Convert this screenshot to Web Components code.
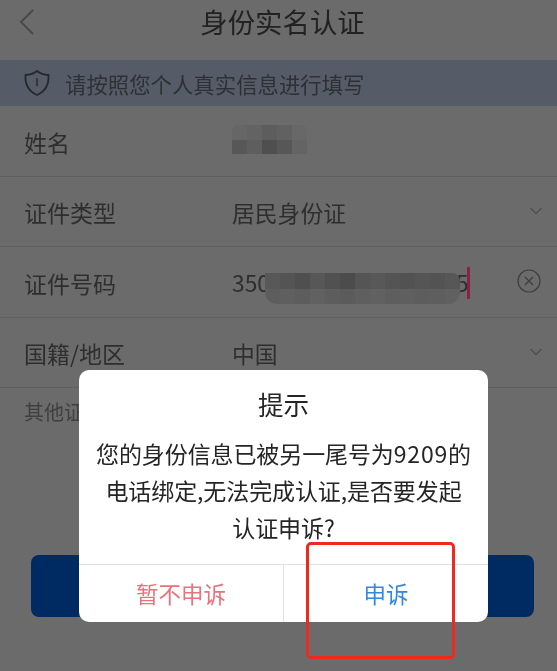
<!DOCTYPE html>
<html lang="zh">
<head>
<meta charset="utf-8">
<title>身份实名认证</title>
<style>
html, body { margin: 0; height: 100%; background: #6b6b6b; }
body { font-family: "Noto Sans CJK SC", "Noto Sans", sans-serif; overflow: hidden; }
</style>
</head>
<body>
<verify-page>
  <nav-bar slot="nav">身份实名认证</nav-bar>
  <notice-bar slot="notice">请按照您个人真实信息进行填写</notice-bar>

  <form-row label="姓名">
    <mosaic-block style="left:232px;top:125px;width:75px;height:29px;border-radius:6px 6px 0 0" cols="5" rows="2"
      shades="#666666,#636363,#5d5d5d,#616161,#686868,#575757,#5e5e5e,#4f4f4f,#575757,#646464"></mosaic-block>
  </form-row>
  <form-row label="证件类型" value="居民身份证" trail="chevron"></form-row>
  <form-row label="证件号码" trail="clear">
    <span>350</span>
    <span style="position:absolute;left:456px;top:265px;line-height:36px">5</span>
    <mosaic-block style="left:265px;top:273px;width:195px;height:31px;border-radius:0 8px 12px 12px" cols="13" rows="2"
      shades="#585858,#545454,#4f4f4f,#575757,#515151,#4c4c4c,#555555,#585858,#545454,#525252,#555555,#535353,#575757,#5d5d5d,#5f5f5f,#5d5d5d,#616161,#5d5d5d,#5b5b5b,#5f5f5f,#616161,#5e5e5e,#5f5f5f,#5d5d5d,#5e5e5e,#606060"></mosaic-block>
    <span style="position:absolute;left:467px;top:267px;width:3px;height:32px;background:#8c2048"></span>
  </form-row>
  <form-row label="国籍/地区" value="中国" trail="chevron"></form-row>

  <div slot="other">其他证件</div>
  <submit-bar slot="submit"></submit-bar>

  <alert-dialog slot="overlay" heading="提示" cancel="暂不申诉" confirm="申诉">
    您的身份信息已被另一尾号为<span style="letter-spacing:.8px">9209</span>的<br>电话绑定,无法完成认证,是否要发起<br>认证申诉?
  </alert-dialog>
  <mark-box slot="overlay"></mark-box>
</verify-page>

<script>
// page frame, everything else gets slotted in
class VerifyPage extends HTMLElement {
  constructor() {
    super();
    this.attachShadow({mode: "open"}).innerHTML = `
    <style>
    :host { display: block; position: relative; width: 557px; height: 671px; overflow: hidden; background: #6b6b6b; color: #2c2c2c; filter: blur(0.35px); }
    .rows { display: flex; flex-direction: column; }
    ::slotted([slot="other"]) { padding: 9px 24px 0; height: 36px; line-height: 30px; font-size: 20px; color: #3f3f3f; }
    </style>
    <slot name="nav"></slot>
    <slot name="notice"></slot>
    <div class="rows"><slot></slot></div>
    <slot name="other"></slot>
    <slot name="submit"></slot>
    <slot name="overlay"></slot>
    `;
  }
}

class NavBar extends HTMLElement {
  constructor() {
    super();
    this.attachShadow({mode: "open"}).innerHTML = `
    <style>
    :host { display: flex; align-items: center; justify-content: center; position: relative; height: 60px; font-size: 27.4px; color: #222; }
    svg { position: absolute; left: 18px; top: 8px; }
    span { margin-top: -19px; margin-left: 8px; }
    </style>
    <svg width="18" height="28" viewBox="0 0 18 28" fill="none" stroke="#4a4a4a" stroke-width="2"><path d="M15 2 3 14l12 12"/></svg>
    <span><slot></slot></span>
    `;
  }
}

class NoticeBar extends HTMLElement {
  constructor() {
    super();
    this.attachShadow({mode: "open"}).innerHTML = `
    <style>
    :host { display: flex; align-items: center; height: 46px; padding-left: 23px; background: #565c67; color: #2e3036; font-size: 21.4px; }
    svg { margin-right: 14px; }
    </style>
    <svg width="28" height="28" viewBox="0 0 28 28" fill="none" stroke="#26282c" stroke-width="1.8"><path d="M14 2c3 2.400 7 3.800 11.500 4 .6 9-2.500 16-11.500 20C5 22 1.900 15 2.500 6 7 5.800 11 4.400 14 2Z"/><path d="M14 9v8" stroke-width="1.400"/></svg>
    <span><slot></slot></span>
    `;
  }
}

class FormRow extends HTMLElement {
  constructor() {
    super();
    this.attachShadow({mode: "open"}).innerHTML = `
    <style>
    :host { display: grid; grid-template-columns: 208px 1fr auto; align-items: center; padding: 2px 0 0 24px; box-sizing: border-box; height: 70.5px; border-bottom: 1px solid #5f5f5f; font-size: 23px; color: #2e2e2e; }
    .trail { width: 28px; display: flex; justify-content: flex-start; }
    .value { font-size: 22.800px; }
    svg { display: block; }
    </style>
    <div class="label"></div>
    <div class="value"><span class="text"></span><slot></slot></div>
    <div class="trail"></div>
    `;
  }

  connectedCallback() {
    const root = this.shadowRoot;
    root.querySelector(".label").textContent = this.getAttribute("label");
    root.querySelector(".text").textContent = this.getAttribute("value") || "";
    const trail = this.getAttribute("trail");
    if (trail == "chevron") {
      root.querySelector(".trail").innerHTML = `<svg style="margin-top:-3px" width="14" height="10" viewBox="0 0 14 10" fill="none" stroke="#505050" stroke-width="1.400"><path d="M1.500 2 7 7.500 12.500 2"/></svg>`;
    }
    if (trail == "clear") {
      root.querySelector(".trail").innerHTML = `<svg style="margin-left:-12px;margin-top:-3px" width="24" height="24" viewBox="0 0 24 24" fill="none" stroke="#3e3e3e" stroke-width="1.200"><circle cx="12" cy="12" r="11"/><path d="m8 8 8 8M16 8l-8 8"/></svg>`;
    }
  }
}

// pixelated censor patch drawn over a value
class MosaicBlock extends HTMLElement {
  constructor() {
    super();
    this.attachShadow({mode: "open"}).innerHTML = `
    <style>
    :host { display: grid; position: absolute; overflow: hidden; filter: blur(0.6px); }
    i { display: block; }
    </style>
    `;
  }

  connectedCallback() {
    const cols = this.getAttribute("cols");
    const rows = this.getAttribute("rows");
    this.style.gridTemplateColumns = `repeat(${cols}, 1fr)`;
    this.style.gridTemplateRows = `repeat(${rows}, 1fr)`;
    this.getAttribute("shades").split(",").forEach(shade => {
      const cell = document.createElement("i");
      cell.style.background = shade;
      this.shadowRoot.appendChild(cell);
    });
  }
}

class SubmitBar extends HTMLElement {
  constructor() {
    super();
    this.attachShadow({mode: "open"}).innerHTML = `
    <style>
    :host { display: block; margin: 122px 23px 0 31px; height: 62px; border-radius: 8px; background: #002a62; }
    </style>
    `;
  }
}

class AlertDialog extends HTMLElement {
  constructor() {
    super();
    this.attachShadow({mode: "open"}).innerHTML = `
    <style>
    :host { display: flex; flex-direction: column; position: absolute; left: 79px; top: 370px; width: 409px; height: 252px; border-radius: 10px; background: #fff; overflow: hidden; color: #252525; }
    .heading { padding-top: 15px; height: 38px; line-height: 38px; text-align: center; font-size: 25.6px; }
    .body { flex: 1; padding-top: 12px; line-height: 37px; text-align: center; font-size: 23px; letter-spacing: -0.1px; }
    .actions { display: grid; grid-template-columns: 205px 1fr; height: 57px; border-top: 1px solid #e2e2e2; font-size: 22.5px; }
    .actions div { display: flex; align-items: center; justify-content: center; padding-bottom: 1px; }
    .cancel { color: #e8727e; border-right: 1px solid #e2e2e2; }
    .confirm { color: #2f8ade; }
    </style>
    <div class="heading"></div>
    <div class="body"><slot></slot></div>
    <div class="actions"><div class="cancel"></div><div class="confirm"></div></div>
    `;
  }

  connectedCallback() {
    const root = this.shadowRoot;
    root.querySelector(".heading").textContent = this.getAttribute("heading");
    root.querySelector(".cancel").textContent = this.getAttribute("cancel");
    root.querySelector(".confirm").textContent = this.getAttribute("confirm");
  }
}

// the red hand-drawn highlight round the confirm button
class MarkBox extends HTMLElement {
  constructor() {
    super();
    this.attachShadow({mode: "open"}).innerHTML = `
    <style>
    :host { display: block; position: absolute; left: 306px; top: 542px; width: 149px; height: 117px; box-sizing: border-box; border: 3px solid #ee2a1e; border-radius: 5px; }
    </style>
    `;
  }
}

customElements.define("verify-page", VerifyPage);
customElements.define("nav-bar", NavBar);
customElements.define("notice-bar", NoticeBar);
customElements.define("form-row", FormRow);
customElements.define("mosaic-block", MosaicBlock);
customElements.define("submit-bar", SubmitBar);
customElements.define("alert-dialog", AlertDialog);
customElements.define("mark-box", MarkBox);
</script>
</body>
</html>
